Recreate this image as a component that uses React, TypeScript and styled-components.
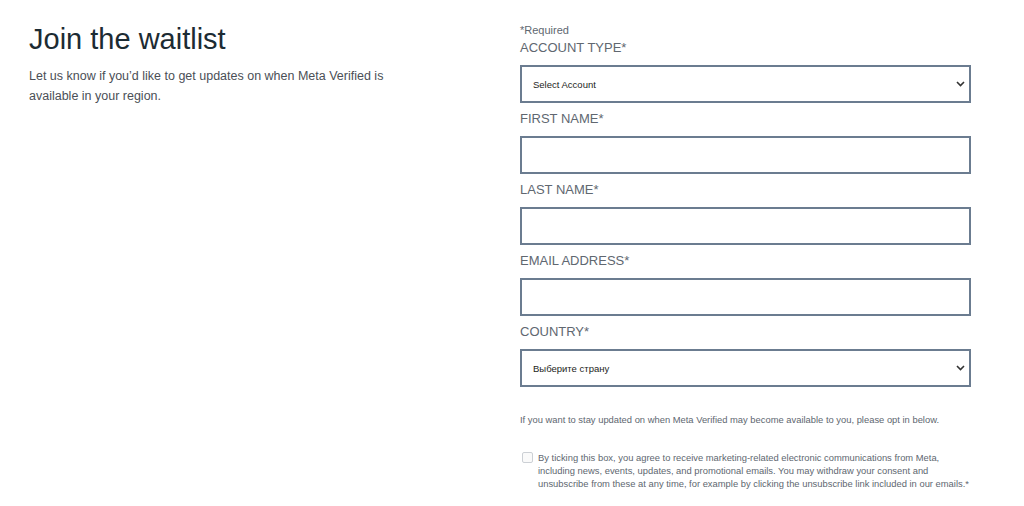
import React from 'react';
import styled, { createGlobalStyle } from 'styled-components';

const GlobalStyle = createGlobalStyle`
    body {
        margin: 0;
        background: #fff;
        font-family: "Liberation Sans", Arial, sans-serif;
    }
`;

const Page = styled.div`
    width: 1024px;
    height: 506px;
    display: grid;
    grid-template-columns: 491px 451px;
    padding: 0 0 0 29px;
    box-sizing: border-box;
    overflow: hidden;
`;

const Intro = styled.div`
    padding-top: 21px;
`;

const Title = styled.h1`
    margin: 0;
    font-size: 29px;
    font-weight: 400;
    line-height: 36px;
    color: #1c2b33;
`;

const Lead = styled.p`
    margin: 9px 0 0;
    width: 370px;
    font-size: 12.5px;
    line-height: 20px;
    color: #4b4f56;
`;

const Form = styled.form`
    padding-top: 23px;
    display: flex;
    flex-direction: column;
`;

const Required = styled.div`
    font-size: 11px;
    line-height: 14px;
    color: #606770;
`;

const Label = styled.label<{ first?: boolean }>`
    display: block;
    margin: ${({ first }) => (first ? '1px 0 7px' : '6px 0 7px')};
    font-size: 13px;
    line-height: 20px;
    color: #606770;
    text-transform: uppercase;
`;

const Input = styled.input`
    display: block;
    width: 451px;
    height: 38px;
    box-sizing: border-box;
    border: 2px solid #6b7c90;
    border-radius: 0;
    background: #fff;
    outline: none;
    font: inherit;
`;

const SelectWrap = styled.div`
    position: relative;
    width: 451px;
    height: 38px;
`;

const Select = styled.select`
    appearance: none;
    width: 100%;
    height: 100%;
    box-sizing: border-box;
    border: 2px solid #6b7c90;
    border-radius: 0;
    background: #fff;
    padding: 0 30px 0 11px;
    font-family: "Liberation Sans", Arial, sans-serif;
    font-size: 9.5px;
    color: #1c1e21;
    outline: none;
`;

const Chevron = styled.svg`
    position: absolute;
    right: 6px;
    top: 16px;
    pointer-events: none;
`;

const Note = styled.p`
    margin: 26px 0 0;
    font-size: 9.4px;
    line-height: 13px;
    color: #606770;
`;

const Consent = styled.label`
    margin-top: 25px;
    display: flex;
    align-items: flex-start;
    gap: 5px;
    padding-left: 2px;
    font-size: 9.4px;
    line-height: 13px;
    color: #606770;
`;

const Box = styled.span`
    flex: none;
    width: 11px;
    height: 11px;
    margin-top: 1px;
    border: 1px solid #ccd0d5;
    border-radius: 2px;
    box-sizing: border-box;
    background: #fafafa;
`;

const Dropdown = ({ placeholder }: { placeholder: string }) => (
    <SelectWrap>
        <Select defaultValue=''>
            <option value=''>{placeholder}</option>
        </Select>
        <Chevron width='9' height='6' viewBox='0 0 9 6'>
            <path d='M1 1l3.5 3.5L8 1' fill='none' stroke='#333' strokeWidth='1.6' />
        </Chevron>
    </SelectWrap>
);

const App = () => (
    <>
        <GlobalStyle />
        <Page>
            <Intro>
                <Title>Join the waitlist</Title>
                <Lead>
                    Let us know if you’d like to get updates on when Meta Verified is available in your region.
                </Lead>
            </Intro>
            <Form onSubmit={e => e.preventDefault()}>
                <Required>*Required</Required>
                <Label first>Account type*</Label>
                <Dropdown placeholder='Select Account' />
                <Label>First name*</Label>
                <Input />
                <Label>Last name*</Label>
                <Input />
                <Label>Email address*</Label>
                <Input />
                <Label>Country*</Label>
                <Dropdown placeholder='Выберите страну' />
                <Note>If you want to stay updated on when Meta Verified may become available to you, please opt in below.</Note>
                <Consent>
                    <Box />
                    <span>
                        By ticking this box, you agree to receive marketing-related electronic communications from Meta,
                        including news, events, updates, and promotional emails. You may withdraw your consent and
                        unsubscribe from these at any time, for example by clicking the unsubscribe link included in our emails.*
                    </span>
                </Consent>
            </Form>
        </Page>
    </>
);

export default App;
